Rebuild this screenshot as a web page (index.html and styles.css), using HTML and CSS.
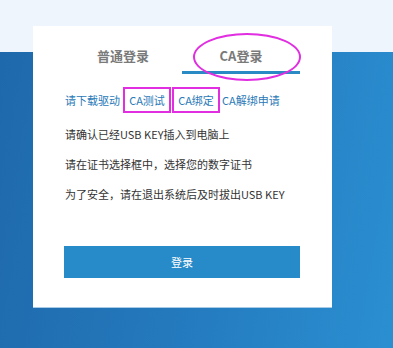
FILE: index.html
```html
<!DOCTYPE html>
<html lang="zh-CN">
<head>
    <meta charset="UTF-8">
    <meta name="viewport" content="width=device-width, initial-scale=1.0">
    <title>CA登录</title>
    <link rel="stylesheet" href="styles.css">
</head>
<body>
    <div class="caixa">
        <div class="abas">
            <div class="aba">普通登录</div>
            <div class="aba ativa">CA登录</div>
        </div>
        <div class="marca-elipse"></div>

        <div class="conteudo">
            <div class="links">
                <a class="link">请下载驱动</a>
                <a class="link marcado primeiro">CA测试</a>
                <a class="link marcado segundo">CA绑定</a>
                <a class="link ultimo">CA解绑申请</a>
            </div>
            <p class="dica">请确认已经USB KEY插入到电脑上</p>
            <p class="dica">请在证书选择框中，选择您的数字证书</p>
            <p class="dica">为了安全，请在退出系统后及时拔出USB KEY</p>
            <button class="entrar">登录</button>
        </div>
    </div>
</body>
</html>
```

FILE: styles.css
```css
body {
    margin: 0;
    padding: 0;
    height: 348px;
    overflow: hidden;
    font-family: "Microsoft YaHei", "Noto Sans CJK SC", sans-serif;
    background:
        linear-gradient(to bottom, #eef5fd 52px, transparent 52px),
        linear-gradient(100deg, #1e68aa 0%, #2479bd 50%, #2a8fd1 100%);
}

.caixa {
    position: relative;
    width: 299px;
    height: 281px;
    margin: 26px 0 0 33px;
    background-color: #fff;
    border-bottom: 1px solid #a9cbe6;
}

.abas {
    display: flex;
    padding: 14px 0 0 31px;
}

.aba {
    width: 118px;
    height: 32px;
    line-height: 32px;
    text-align: center;
    font-size: 13px;
    font-weight: bold;
    color: #7a7a7a;
    border-bottom: 2px solid transparent;
}

.aba.ativa {
    border-bottom: 3px solid #2a8bc4;
    height: 31px;
}

/* anotação rosa por cima da aba */
.marca-elipse {
    position: absolute;
    left: 160px;
    top: 7px;
    width: 104px;
    height: 44px;
    border: 2px solid #e02ee0;
    border-radius: 50%;
}

.conteudo {
    padding: 12px 32px 0 32px;
}

.links {
    display: flex;
    align-items: center;
    height: 28px;
}

.link {
    font-size: 11px;
    color: #2a7ab8;
    white-space: nowrap;
}

.link.marcado {
    box-sizing: border-box;
    width: 48px;
    height: 26px;
    line-height: 22px;
    text-align: center;
    border: 2px solid #e02ee0;
}

.link.primeiro {
    margin-left: 3px;
}

.link.segundo {
    margin-left: 1px;
}

.link.ultimo {
    margin-left: 2px;
}

.dica {
    margin: 0;
    font-size: 11px;
    color: #333;
    height: 30px;
    line-height: 30px;
}

.dica:first-of-type {
    margin-top: 5px;
}

.entrar {
    display: block;
    width: 236px;
    height: 32px;
    margin: 37px 0 0 -1px;
    border: none;
    background-color: #288bc9;
    color: #fff;
    font-family: inherit;
    font-size: 11px;
    cursor: pointer;
}
```
